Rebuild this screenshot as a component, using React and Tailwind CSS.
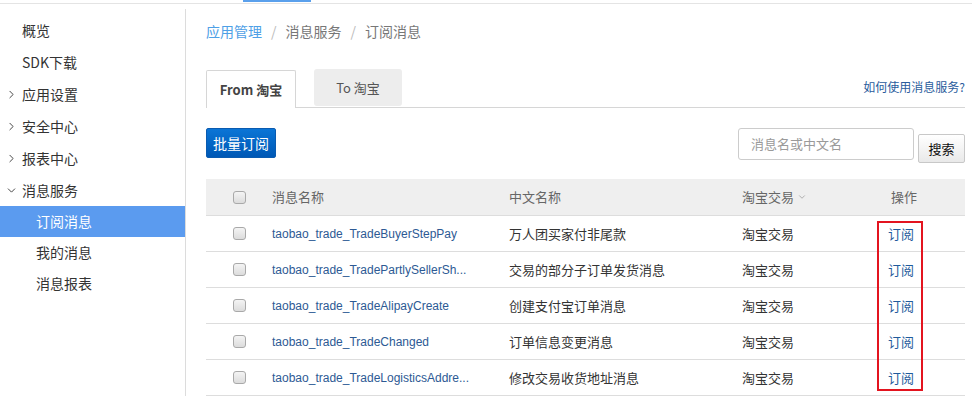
import { ChevronRight, ChevronDown } from 'lucide-react'

const cjk = '"Noto Sans CJK SC", "Liberation Sans", sans-serif'

const navTop = [
  { label: '概览' },
  { label: 'SDK下载' },
  { label: '应用设置', arrow: 'right' },
  { label: '安全中心', arrow: 'right' },
  { label: '报表中心', arrow: 'right' },
  { label: '消息服务', arrow: 'down' },
]

const navSub = [
  { label: '订阅消息', active: true },
  { label: '我的消息' },
  { label: '消息报表' },
]

const rows = [
  ['taobao_trade_TradeBuyerStepPay', '万人团买家付非尾款'],
  ['taobao_trade_TradePartlySellerSh...', '交易的部分子订单发货消息'],
  ['taobao_trade_TradeAlipayCreate', '创建支付宝订单消息'],
  ['taobao_trade_TradeChanged', '订单信息变更消息'],
  ['taobao_trade_TradeLogisticsAddre...', '修改交易收货地址消息'],
]

function Checkbox() {
  return (
    <span className="block w-[13px] h-[13px] rounded-[3px] border border-[#a9a9a9] bg-gradient-to-b from-[#f4f4f4] to-[#dcdcdc]" />
  )
}

function Sidebar() {
  return (
    <aside className="w-[186px] shrink-0 mt-[5px] border-r border-[#dcdcdc] pt-[5px]">
      {navTop.map((item) => (
        <div key={item.label} className="h-8 flex items-center text-[14px] text-[#333]">
          <span className="w-[22px] flex justify-center pl-[1px] text-[#444]">
            {item.arrow === 'right' && <ChevronRight size={13} strokeWidth={1.8} />}
            {item.arrow === 'down' && <ChevronDown size={13} strokeWidth={1.8} />}
          </span>
          <span>{item.label}</span>
        </div>
      ))}
      {navSub.map((item) => (
        <div
          key={item.label}
          className={
            item.active
              ? 'h-[31px] flex items-center pl-[36px] text-[14px] text-white bg-[#5b9bef]'
              : 'h-[31px] flex items-center pl-[36px] text-[14px] text-[#333]'
          }
        >
          {item.label}
        </div>
      ))}
    </aside>
  )
}

function Table() {
  const cols = 'grid grid-cols-[66px_237px_233px_146px_1fr] items-center'
  return (
    <div className="relative mt-[16px]">
      <div className={cols + ' h-[36px] bg-[#efefef] text-[13px] text-[#666]'}>
        <div className="pl-[27px]"><Checkbox /></div>
        <div>消息名称</div>
        <div>中文名称</div>
        <div className="flex items-center gap-[3px]">
          淘宝交易
          <ChevronDown size={10} strokeWidth={1.5} className="text-[#888]" />
        </div>
        <div className="pl-[3px]">操作</div>
      </div>
      {rows.map(([name, cn]) => (
        <div key={name} className={cols + ' h-[36px] border-t border-[#dddddd] text-[13px] text-[#333]'}>
          <div className="pl-[27px]"><Checkbox /></div>
          <div className="text-[12px] text-[#2d5a94]" style={{ fontFamily: '"Liberation Sans", Arial, sans-serif' }}>{name}</div>
          <div>{cn}</div>
          <div>淘宝交易</div>
          <div className="text-[#1f5b9c]">订阅</div>
        </div>
      ))}
      <div className="border-t border-[#dddddd]" />
      <div className="absolute left-[671px] top-[42px] w-[46px] h-[170px] border-2 border-[#e3141f]" />
    </div>
  )
}

export default function App() {
  return (
    <div className="w-[972px] h-[398px] overflow-hidden bg-white" style={{ fontFamily: cjk }}>
      <div className="h-[4px] border-b border-[#e4e4e4]">
        <div className="ml-[243px] w-[68px] h-[2px] bg-[#5aa0ec]" />
      </div>
      <div className="flex">
        <Sidebar />
        <main className="flex-1 pl-[20px] pr-[7px]">
          <div className="mt-[17px] h-5 flex items-center gap-[9px] text-[14px] text-[#777]">
            <span className="text-[#4ea0e6]">应用管理</span>
            <span className="text-[#bbb]">/</span>
            <span>消息服务</span>
            <span className="text-[#bbb]">/</span>
            <span>订阅消息</span>
          </div>
          <div className="mt-[28px] flex items-end border-b border-[#d6d6d6]">
            <div className="w-[90px] h-[38px] -mb-px border border-b-0 border-[#d6d6d6] bg-white flex items-center justify-center text-[13px] font-bold text-[#444] rounded-t-[2px]">
              From 淘宝
            </div>
            <div className="ml-[18px] mb-px w-[88px] h-[37px] bg-[#ededed] rounded-[3px] flex items-center justify-center text-[13px] text-[#555]">
              To 淘宝
            </div>
            <a className="ml-auto mb-[11px] text-[12px] text-[#2a5c9c]">如何使用消息服务?</a>
          </div>
          <div className="mt-[20px] flex items-start">
            <button className="w-[70px] h-[30px] rounded-[2px] bg-gradient-to-b from-[#0b75d6] to-[#0058b5] text-white text-[14px] border border-[#0a5bb0]">
              批量订阅
            </button>
            <div className="ml-auto w-[176px] h-[32px] border border-[#cccccc] rounded-[3px] flex items-center pl-[12px] text-[13px] text-[#9a9a9a]">
              消息名或中文名
            </div>
            <button className="ml-[4px] mt-[6px] w-[47px] h-[29px] border border-[#c8c8c8] rounded-[2px] bg-gradient-to-b from-white to-[#e9e9e9] text-[13px] text-[#111]">
              搜索
            </button>
          </div>
          <Table />
        </main>
      </div>
    </div>
  )
}
